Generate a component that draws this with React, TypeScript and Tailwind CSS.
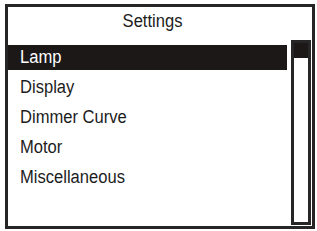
export default function App() {
  const items = ["Lamp", "Display", "Dimmer Curve", "Motor", "Miscellaneous"];
  return (
    <div
      className="w-[317px] h-[231px] bg-white pt-[4px] pl-[5px]"
      style={{ fontFamily: '"Liberation Sans", Arial, sans-serif' }}
    >
      <div className="w-[310px] h-[225px] border-[3px] border-[#262626] flex flex-col">
        <div className="h-[33px] pr-[14px] pt-[2px] text-center text-[18px] leading-[25px] text-[#1c1c1c]">
          <span className="inline-block scale-x-[0.92] origin-center">Settings</span>
        </div>
        <div className="flex flex-1 min-h-0">
          <div className="flex-1 pt-[5px]">
            {items.map((it, i) => (
              <div
                key={it}
                className={
                  i === 0
                    ? "h-[25px] mb-[5px] mr-[4px] bg-[#1c1818] text-white pl-[12px] text-[18px] leading-[25px]"
                    : "h-[25px] mb-[5px] mr-[4px] text-[#1c1c1c] pl-[12px] text-[18px] leading-[25px]"
                }
              >
                <span className="inline-block scale-x-[0.92] origin-left">{it}</span>
              </div>
            ))}
          </div>
          <div className="w-[20px] mr-[1px] mb-[1px] border-[3px] border-[#262626] flex flex-col">
            <div className="h-[15px] bg-[#1c1818]" />
          </div>
        </div>
      </div>
    </div>
  );
}
